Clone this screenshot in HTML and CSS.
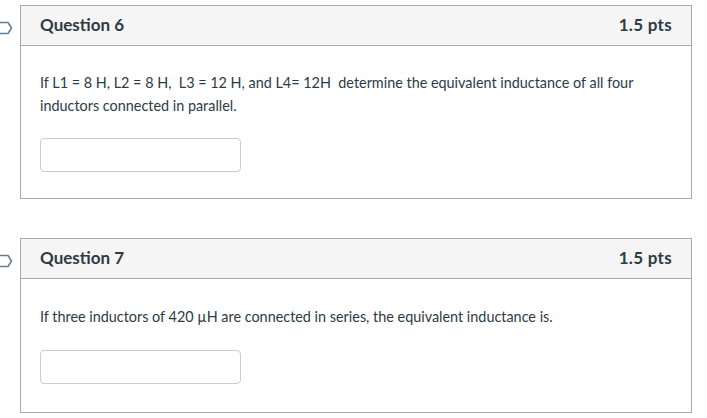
FILE: index.html
```html
<!DOCTYPE html>
<html>
<head>
<meta charset="utf-8">
<link rel="stylesheet" href="styles.css">
</head>
<body>
<div class="quiz">
  <div class="row">
    <div class="flag-col">
      <svg class="flag" width="13" height="14" viewBox="0 0 13 14"><path d="M-2 1.5 H8 L11.5 7 L8 12.5 H-2" fill="none" stroke="#5f7d95" stroke-width="1.5" stroke-linejoin="round"/></svg>
    </div>
    <div class="card">
      <div class="card-header">
        <span class="title">Question 6</span>
        <span class="pts">1.5 pts</span>
      </div>
      <div class="card-body">
        <p class="text">If L1 = 8 H, L2 = 8 H,&nbsp; L3 = 12 H, and L4= 12H&nbsp; determine the equivalent inductance of all four inductors connected in parallel.</p>
        <input class="answer" type="text">
      </div>
    </div>
  </div>
  <div class="row second">
    <div class="flag-col">
      <svg class="flag" width="13" height="14" viewBox="0 0 13 14"><path d="M-2 1.5 H8 L11.5 7 L8 12.5 H-2" fill="none" stroke="#5f7d95" stroke-width="1.5" stroke-linejoin="round"/></svg>
    </div>
    <div class="card">
      <div class="card-header">
        <span class="title">Question 7</span>
        <span class="pts">1.5 pts</span>
      </div>
      <div class="card-body two">
        <p class="text">If three inductors of 420 µH are connected in series, the equivalent inductance is.</p>
        <input class="answer" type="text">
      </div>
    </div>
  </div>
</div>
</body>
</html>
```
FILE: styles.css
```css
html, body {
  margin: 0;
  padding: 0;
  background: #fff;
}
body {
  font-family: Lato, "Liberation Sans", sans-serif;
  color: #2d3b45;
}
.quiz {
  padding-top: 5px;
}
.row {
  display: flex;
  align-items: flex-start;
}
.row.second {
  margin-top: 39px;
}
.flag-col {
  width: 20px;
  flex: none;
  padding-top: 16px;
}
.flag {
  display: block;
}
.card {
  width: 670px;
  border: 1px solid #aaaaaa;
}
.card-header {
  box-sizing: border-box;
  height: 40px;
  background: #f5f5f5;
  border-bottom: 1px solid #aaaaaa;
  display: flex;
  align-items: center;
  justify-content: space-between;
  padding: 0 19px 2px 19px;
}
.title {
  font-size: 17px;
  font-weight: 700;
}
.pts {
  font-size: 17px;
  font-weight: 700;
  letter-spacing: 0.3px;
}
.card-body {
  padding: 25px 19px 26px;
}
.card-body .text {
  margin-bottom: 21px;
}
.card-body.two {
  padding-top: 26px;
  padding-bottom: 28px;
}
.card-body.two .text {
  margin-bottom: 22px;
}
.text {
  margin: 0;
  font-size: 14.4px;
  line-height: 23px;
}
.answer {
  display: block;
  box-sizing: border-box;
  width: 201px;
  height: 34px;
  margin: 0;
  border: 1px solid #c7cdd1;
  border-radius: 4px;
  background: #fff;
}
```
